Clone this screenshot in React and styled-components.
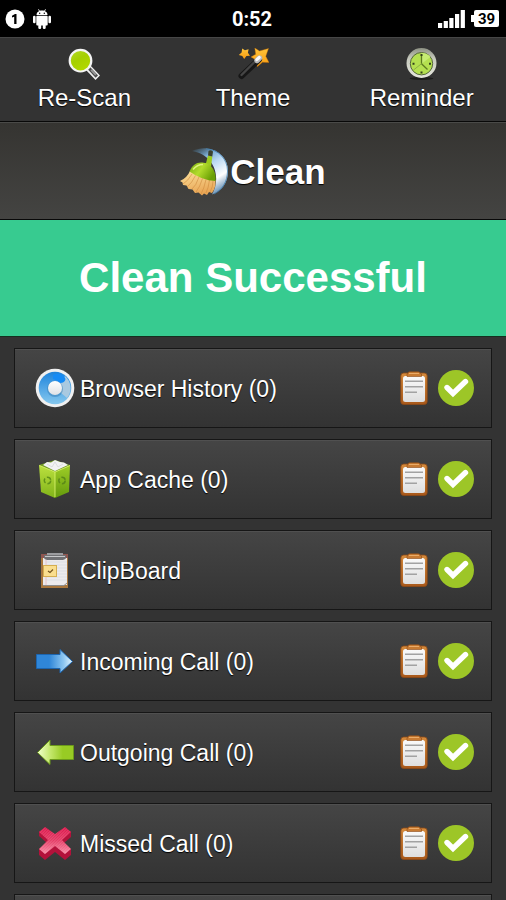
import React, { useState } from "react";
import styled, { createGlobalStyle } from "styled-components";

const items = [
  { id: "browser", label: "Browser History (0)", icon: BrowserIcon },
  { id: "cache", label: "App Cache (0)", icon: CacheIcon },
  { id: "clipboard", label: "ClipBoard", icon: PadIcon },
  { id: "incoming", label: "Incoming Call (0)", icon: IncomingIcon },
  { id: "outgoing", label: "Outgoing Call (0)", icon: OutgoingIcon },
  { id: "missed", label: "Missed Call (0)", icon: MissedIcon },
];

export default function App() {
  return (
    <>
      <GlobalStyle />
      <Screen>
        <StatusBar>
          <StatusGroup>
            <NotificationIcon />
            <DroidIcon />
          </StatusGroup>
          <Clock>0:52</Clock>
          <StatusGroup $end>
            <SignalIcon />
            <Battery>39</Battery>
          </StatusGroup>
        </StatusBar>
        <Toolbar>
          <ToolButton type="button">
            <ScanIcon />
            Re-Scan
          </ToolButton>
          <ToolButton type="button">
            <WandIcon />
            Theme
          </ToolButton>
          <ToolButton type="button">
            <ClockIcon />
            Reminder
          </ToolButton>
        </Toolbar>
        <CleanButton type="button">
          <BroomIcon />
          Clean
        </CleanButton>
        <Banner role="status">Clean Successful</Banner>
        <List>
          {items.map((item) => (
            <CleanRow key={item.id} item={item} />
          ))}
          <Row aria-hidden="true" />
        </List>
      </Screen>
    </>
  );
}

function CleanRow({ item }) {
  const [checked, setChecked] = useState(true);
  const Icon = item.icon;
  return (
    <Row>
      <RowLabel htmlFor={item.id}>
        <Icon />
        <RowText>{item.label}</RowText>
      </RowLabel>
      <DetailsButton type="button" aria-label={"Details: " + item.label}>
        <DetailsIcon />
      </DetailsButton>
      <Tick>
        <TickInput
          type="checkbox"
          id={item.id}
          checked={checked}
          onChange={(e) => setChecked(e.target.checked)}
        />
        {checked && <TickIcon />}
      </Tick>
    </Row>
  );
}

/* status bar icons */

function NotificationIcon() {
  return (
    <svg width="20" height="20" viewBox="0 0 20 20">
      <circle cx="10" cy="10" r="9.5" fill="#fff" />
      <path d="M7 6.7L10 5H11.5V15H9.2V7.8L7 8.6Z" fill="#000" />
    </svg>
  );
}

function DroidIcon() {
  return (
    <svg width="18" height="20" viewBox="0 0 18 20" fill="#fff">
      <path d="M3.5 6C3.5 3.2 6 1.6 9 1.6S14.5 3.2 14.5 6Z" />
      <path d="M5.5 0.3L7 3M12.5 0.3L11 3" stroke="#fff" strokeWidth="0.9" />
      <rect x="3.3" y="6.8" width="11.4" height="9.6" rx="1" />
      <rect x="0" y="6.8" width="2.6" height="7.4" rx="1.2" />
      <rect x="15.4" y="6.8" width="2.6" height="7.4" rx="1.2" />
      <rect x="5.3" y="14" width="2.9" height="6" rx="1.2" />
      <rect x="9.8" y="14" width="2.9" height="6" rx="1.2" />
      <circle cx="6.7" cy="4.2" r="0.7" fill="#000" />
      <circle cx="11.3" cy="4.2" r="0.7" fill="#000" />
    </svg>
  );
}

function SignalIcon() {
  return (
    <svg width="28" height="18" viewBox="0 0 28 18" fill="#fff">
      <rect x="0" y="13" width="4.2" height="5" />
      <rect x="5.7" y="11" width="4.2" height="7" />
      <rect x="11.3" y="8" width="4.2" height="10" />
      <rect x="17" y="4" width="4.2" height="14" />
      <rect x="22.7" y="0" width="4.2" height="18" />
    </svg>
  );
}

/* toolbar icons */

function ScanIcon() {
  return (
    <svg width="32" height="32" viewBox="0 0 32 32">
      <defs>
        <linearGradient id="lens" x1="0" y1="0" x2="0.6" y2="1">
          <stop offset="0" stopColor="#b4db2c" />
          <stop offset="0.5" stopColor="#a5cf00" />
          <stop offset="1" stopColor="#b2d800" />
        </linearGradient>
      </defs>
      <path d="M17.5 21.5L22 17L32 27.5L27.5 32Z" fill="#f2f2f2" />
      <path d="M20 21.5L22.3 19.2L30 27.5L27.6 29.8Z" fill="#4c4c4c" />
      <path d="M22.5 22.5L23.8 21.2L28.5 26.3L27.2 27.6Z" fill="#999" />
      <circle cx="12.5" cy="12.7" r="10.8" fill="url(#lens)" stroke="#f4f4f4" strokeWidth="2.2" />
    </svg>
  );
}

function WandIcon() {
  return (
    <svg width="32" height="32" viewBox="0 0 32 32">
      <defs>
        <linearGradient id="star" x1="0" y1="0" x2="0" y2="1">
          <stop offset="0" stopColor="#ffc53a" />
          <stop offset="1" stopColor="#f79a10" />
        </linearGradient>
      </defs>
      <path
        d="M17.8 0L22.5 3L31.5 0.5L28.8 8.3L32 14.6L25.5 14.2L20.3 18.7L19.2 12L14 9L18.7 6.3Z"
        fill="url(#star)"
        stroke="#c96e00"
        strokeWidth="0.4"
      />
      <path d="M4.5 28L22 11.5" stroke="#171717" strokeWidth="6" strokeLinecap="round" />
      <path d="M4.5 27L17 14.5" stroke="#454545" strokeWidth="2.4" strokeLinecap="round" />
      <path d="M20 12.5L22.5 10" stroke="#b9b9b9" strokeWidth="5.4" strokeLinecap="round" />
      <path d="M19.8 11.7L22.3 9.4" stroke="#fafafa" strokeWidth="3" strokeLinecap="round" />
      <path
        d="M5.2 0.5L7.9 2.2L11.6 1.3L10.9 4.8L13 7.7L9.4 8L7.2 11L5.3 7.9L1.8 7L4.6 4.4Z"
        fill="url(#star)"
      />
    </svg>
  );
}

function ClockIcon() {
  return (
    <svg width="32" height="32" viewBox="0 0 32 32">
      <defs>
        <linearGradient id="rim" x1="0" y1="0" x2="0" y2="1">
          <stop offset="0" stopColor="#8d9183" />
          <stop offset="0.35" stopColor="#c5c8bc" />
          <stop offset="1" stopColor="#e6e7de" />
        </linearGradient>
      </defs>
      <ellipse cx="15.5" cy="30.5" rx="12" ry="1.5" fill="#1d1d1d" />
      <circle cx="15.5" cy="15" r="15" fill="url(#rim)" />
      <circle cx="15.5" cy="15.7" r="11.2" fill="#b4e050" stroke="#54663b" strokeWidth="1" />
      <path d="M15.5 5V15.7L24.5 9A11 11 0 0 0 15.5 5Z" fill="#c6ec73" />
      <path d="M15.5 15.7V7M15.5 15.7L21.5 21.5" stroke="#5d7d20" strokeWidth="1.3" fill="none" />
      <path d="M15.5 15.7L7.5 22" stroke="#82a63e" strokeWidth="0.8" />
      <path d="M15.5 6V8M15.5 23.5V25.5M6.5 15.7H8.5M23 15.7H25" stroke="#33411c" strokeWidth="2" />
    </svg>
  );
}

function BroomIcon() {
  return (
    <svg width="50" height="50" viewBox="0 0 50 50">
      <defs>
        <linearGradient id="moon" x1="0.1" y1="0" x2="0.6" y2="1">
          <stop offset="0" stopColor="#4b7fa6" stopOpacity="0.2" />
          <stop offset="0.25" stopColor="#7fb0d8" />
          <stop offset="0.45" stopColor="#bcdaf3" />
          <stop offset="0.75" stopColor="#fff" />
          <stop offset="1" stopColor="#6f96b8" />
        </linearGradient>
        <linearGradient id="bristle" x1="0" y1="0" x2="0.3" y2="1">
          <stop offset="0" stopColor="#fbe09c" />
          <stop offset="1" stopColor="#e9a655" />
        </linearGradient>
        <linearGradient id="head" x1="0" y1="0" x2="1" y2="0.5">
          <stop offset="0" stopColor="#79ad12" />
          <stop offset="0.5" stopColor="#b3dc2c" />
          <stop offset="1" stopColor="#6a9f04" />
        </linearGradient>
      </defs>
      <path d="M12 4C30 -4 48 7 48 24C48 36 42 44 32 47.5C41 32 36 8 12 4Z" fill="url(#moon)" />
      <path d="M26 1.8C39 2.5 47.5 12.5 47.5 24C47.5 35 42 43 34 47" stroke="#3f7dae" strokeWidth="0.8" fill="none" />
      <path
        d="M10 24L35.5 33Q36 41 32 46L29 45L27 48L24 46.5L22 48.5L18.5 45.5L15 46L12.5 42.5L8.5 42L6.5 38.5L3 38L2.5 35.5L0 34Q7 31 10 24Z"
        fill="url(#bristle)"
      />
      <path
        d="M12 27Q8 34 3 37M15.5 28.5Q12 36 7 40M19 30Q16 39 12 42M22.5 31.5Q20 40 16 45M26 32.5Q24 42 21 47M29.5 33Q28.5 41 26 46M33 34Q33 40 30 45"
        stroke="#cf8a3e"
        strokeWidth="0.6"
        fill="none"
      />
      <path d="M28 8.5L32.3 9.5L31 20L25.5 18Z" fill="#9ccc1d" />
      <path d="M28.5 4Q30.5 2.5 33 4.5L32.3 9.5L28 8.5Z" fill="#3b4330" />
      <path d="M9.5 24.5C12 18.5 16 15.5 21 15.5Q26 15 30.5 18.5Q36.5 25 35.5 34Q22 33.5 9.5 24.5Z" fill="url(#head)" />
      <path d="M13 22.5Q17 17.5 23 17.5" stroke="#e0f57c" strokeWidth="1.5" fill="none" />
    </svg>
  );
}

/* row icons */

function BrowserIcon() {
  return (
    <svg width="40" height="40" viewBox="0 0 40 40">
      <defs>
        <linearGradient id="disc" x1="0" y1="0" x2="0" y2="1">
          <stop offset="0" stopColor="#1c83dc" />
          <stop offset="1" stopColor="#86c8ee" />
        </linearGradient>
        <linearGradient id="knob" x1="0" y1="0" x2="0" y2="1">
          <stop offset="0" stopColor="#fff" />
          <stop offset="1" stopColor="#dfe2e6" />
        </linearGradient>
      </defs>
      <circle cx="20" cy="20" r="19.3" fill="#f0f0f0" />
      <circle cx="20" cy="20" r="16.3" fill="url(#disc)" />
      <path d="M20 20L30 8A16 16 0 0 1 32 30Z" fill="#a9c9e0" />
      <path d="M18 11Q22 12 25 15Q30 15 30.5 11L29 8Q23 4 18 7Z" fill="#168bf5" />
      <circle cx="20" cy="21" r="8" fill="#357eb5" opacity="0.5" />
      <circle cx="20" cy="20" r="7" fill="url(#knob)" />
    </svg>
  );
}

function CacheIcon() {
  return (
    <svg width="40" height="40" viewBox="0 0 40 40">
      <defs>
        <linearGradient id="binLeft" x1="0" y1="0" x2="0" y2="1">
          <stop offset="0" stopColor="#bce13f" />
          <stop offset="1" stopColor="#80b319" />
        </linearGradient>
        <linearGradient id="binRight" x1="0" y1="0" x2="0" y2="1">
          <stop offset="0" stopColor="#9fce28" />
          <stop offset="1" stopColor="#649a0c" />
        </linearGradient>
      </defs>
      <path d="M4 6L20 1L35 6L20 13Z" fill="#719c22" />
      <path d="M8 6L12 3L16 3.5L20 1L25 3L29 3.5L33 6L20 12Z" fill="#f2f2f2" />
      <path d="M12 5L17 8L20 3L23 8L28 5" stroke="#d5d8d8" strokeWidth="0.8" fill="none" />
      <path d="M4 6L20 13V39L6 33Z" fill="url(#binLeft)" />
      <path d="M35 6L20 13V39L34 33Z" fill="url(#binRight)" />
      <path d="M4.5 6.5L20 13L35 6.5M20 13V38" stroke="#d8f36b" strokeWidth="0.9" fill="none" />
      <circle cx="12.5" cy="21.5" r="3.2" fill="none" stroke="#62921a" strokeWidth="1.5" strokeDasharray="5 2" />
      <circle cx="27" cy="21.5" r="3.2" fill="none" stroke="#5c8a18" strokeWidth="1.5" strokeDasharray="5 2" />
    </svg>
  );
}

function PadIcon() {
  return (
    <svg width="40" height="40" viewBox="0 0 40 40">
      <rect x="6" y="4" width="27" height="34" fill="#a9773d" />
      <rect x="6" y="4" width="27" height="4" fill="#8f5650" />
      <rect x="8" y="8" width="24" height="27" fill="#eceaec" />
      <path d="M11 12H32M11 15H32M11 18H32M11 21H32M11 24H32M11 27H32M11 30H32" stroke="#dcdfe4" />
      <path d="M11 8V35" stroke="#e8c4c4" />
      <path d="M8 35.5H29L32 33" stroke="#8d8d8d" fill="none" />
      <path d="M9 5H12V3H28V5H31V8Q30 10 26 10H14Q10 10 9 8Z" fill="#707174" />
      <path d="M12 4H28M10 6.5H30" stroke="#c7c8ca" />
      <rect x="8.5" y="15.5" width="13" height="11" fill="#fade8e" stroke="#d5ae50" />
      <path d="M13 21L15 22.5L18 19.5" stroke="#74541f" strokeWidth="1.2" fill="none" />
    </svg>
  );
}

function IncomingIcon() {
  return (
    <svg width="40" height="40" viewBox="0 0 40 40">
      <defs>
        <linearGradient id="inArrow" x1="0" y1="0" x2="1" y2="0">
          <stop offset="0.35" stopColor="#2f86d8" />
          <stop offset="0.75" stopColor="#8cc6f1" />
          <stop offset="1" stopColor="#e6f6ff" />
        </linearGradient>
      </defs>
      <path d="M1.5 13.5H25V8.5L37.5 20.5L25 32V27.5H1.5Z" fill="url(#inArrow)" stroke="#1c65af" />
    </svg>
  );
}

function OutgoingIcon() {
  return (
    <svg width="40" height="40" viewBox="0 0 40 40">
      <defs>
        <linearGradient id="outArrow" x1="0" y1="0" x2="1" y2="0">
          <stop offset="0" stopColor="#f2ffd0" />
          <stop offset="0.35" stopColor="#c5e86d" />
          <stop offset="0.7" stopColor="#98cb24" />
        </linearGradient>
      </defs>
      <path d="M38.5 13.5H15V8L2.5 20.5L15 32.5V27.5H38.5Z" fill="url(#outArrow)" stroke="#6b991a" />
    </svg>
  );
}

function MissedIcon() {
  return (
    <svg width="40" height="40" viewBox="0 0 40 40">
      <defs>
        <linearGradient id="cross" x1="0" y1="0" x2="0" y2="1">
          <stop offset="0" stopColor="#dc1248" />
          <stop offset="0.5" stopColor="#e43a64" />
          <stop offset="1" stopColor="#f98ba5" />
        </linearGradient>
        <pattern id="ribs" width="2" height="2" patternUnits="userSpaceOnUse" patternTransform="rotate(45)">
          <rect width="1" height="2" fill="#fff" opacity="0.15" />
        </pattern>
      </defs>
      <path
        d="M4 26V32L10 37L20 29L30 37L36 32V26L29 20L36 14V8L20 18L4 8V13L12 20Z"
        fill="#b3123b"
      />
      <path
        d="M10 4L20 11L30 4L36 9L27 17L36 26L30 31L20 23L10 31L4 26L13 17L4 9Z"
        fill="url(#cross)"
      />
      <path
        d="M10 4L20 11L30 4L36 9L27 17L36 26L30 31L20 23L10 31L4 26L13 17L4 9Z"
        fill="url(#ribs)"
      />
    </svg>
  );
}

function DetailsIcon() {
  return (
    <svg width="28" height="34" viewBox="0 0 28 34">
      <defs>
        <linearGradient id="board" x1="0" y1="0" x2="0" y2="1">
          <stop offset="0" stopColor="#d58b3d" />
          <stop offset="1" stopColor="#a8581a" />
        </linearGradient>
        <linearGradient id="paper" x1="0" y1="0" x2="0" y2="1">
          <stop offset="0" stopColor="#fafafa" />
          <stop offset="1" stopColor="#dedede" />
        </linearGradient>
      </defs>
      <rect x="0.8" y="2" width="26.4" height="31.5" rx="3" fill="url(#board)" stroke="#8c4917" strokeWidth="0.8" />
      <rect x="3" y="5" width="22" height="26" rx="2.5" fill="url(#paper)" />
      <path d="M8 2Q8 0.7 10 0.7H18Q20 0.7 20 2L21.5 3V5.5H7V3Z" fill="#c87b32" stroke="#8c4917" strokeWidth="0.6" />
      <path d="M9 2.5H19" stroke="#eaab68" />
      <path d="M5 10.3H23M5 15.8H23M5 21.3H17" stroke="#a2a2a2" strokeWidth="1.4" />
    </svg>
  );
}

function TickIcon() {
  return (
    <svg width="36" height="36" viewBox="0 0 36 36">
      <path
        d="M9 17.5L15 23.5L27.5 11.5"
        fill="none"
        stroke="#fff"
        strokeWidth="5.4"
        strokeLinecap="round"
      />
    </svg>
  );
}

const GlobalStyle = createGlobalStyle`
  * {
    box-sizing: border-box;
  }
  body {
    margin: 0;
    background: #333;
    color: #fff;
    font-family: "Liberation Sans", Arial, sans-serif;
  }
  button {
    border: 0;
    padding: 0;
    background: none;
    color: inherit;
    font: inherit;
    cursor: pointer;
  }
  svg {
    display: block;
    flex: none;
  }
`;

const Screen = styled.div`
  display: flex;
  flex-direction: column;
  height: 100vh;
  overflow: hidden;
`;

const StatusBar = styled.header`
  display: grid;
  grid-template-columns: 1fr auto 1fr;
  align-items: center;
  flex: none;
  height: 37px;
  padding: 0 7px 0 5px;
  background: #000;
`;

const StatusGroup = styled.div`
  display: flex;
  align-items: center;
  justify-content: ${(props) => (props.$end ? "flex-end" : "flex-start")};
  gap: 8px;
`;

const Clock = styled.time`
  font-family: Roboto, sans-serif;
  font-size: 20px;
  font-weight: 700;
`;

const Battery = styled.span`
  position: relative;
  width: 25px;
  height: 17px;
  border-radius: 2px;
  background: #fff;
  color: #000;
  font-family: Roboto, sans-serif;
  font-size: 15px;
  font-weight: 700;
  line-height: 18px;
  text-align: center;
  &::before {
    content: "";
    position: absolute;
    top: 5px;
    left: -3px;
    width: 3px;
    height: 7px;
    background: #fff;
  }
`;

const Toolbar = styled.nav`
  display: grid;
  grid-template-columns: repeat(3, 1fr);
  flex: none;
  border-top: 1px solid #464646;
  border-bottom: 1px solid #080808;
  background: #333;
`;

const ToolButton = styled.button`
  display: flex;
  flex-direction: column;
  align-items: center;
  gap: 4px;
  padding: 10px 0 9px;
  font-size: 24px;
  line-height: 28px;
  text-shadow: 0 1px 1px #000;
`;

const CleanButton = styled.button`
  display: flex;
  align-items: center;
  justify-content: center;
  flex: none;
  height: 98px;
  padding-top: 2px;
  border-top: 1px solid #4a4a48;
  border-bottom: 1px solid #080808;
  background: linear-gradient(#353431, #444442);
  font-size: 35px;
  font-weight: 700;
  text-shadow: 0 1px 1px #000;
`;

const Banner = styled.div`
  flex: none;
  padding: 34px 0;
  border-bottom: 1px solid #14301f;
  background: #37cb90;
  font-size: 42px;
  font-weight: 700;
  line-height: 48px;
  text-align: center;
`;

const List = styled.ul`
  display: flex;
  flex-direction: column;
  gap: 11px;
  flex: 1;
  min-height: 0;
  margin: 0;
  padding: 11px 14px;
  overflow-y: auto;
  scrollbar-width: none;
  list-style: none;
`;

const Row = styled.li`
  display: flex;
  align-items: center;
  flex: none;
  height: 80px;
  padding: 0 17px 0 20px;
  border: 1px solid #161616;
  background: linear-gradient(#454545, #333);
  box-shadow: inset 0 1px 0 #505050;
`;

const RowLabel = styled.label`
  display: flex;
  align-items: center;
  gap: 5px;
  flex: 1;
`;

const RowText = styled.span`
  padding-top: 2px;
  font-size: 23px;
  line-height: 28px;
  text-shadow: 0 1px 1px #000;
`;

const DetailsButton = styled.button`
  flex: none;
  margin-right: 10px;
`;

const Tick = styled.span`
  display: grid;
  flex: none;
  > * {
    grid-area: 1 / 1;
  }
  svg {
    pointer-events: none;
    z-index: 1;
  }
`;

const TickInput = styled.input`
  appearance: none;
  width: 36px;
  height: 36px;
  margin: 0;
  border-radius: 50%;
  background: #5c5c5c;
  cursor: pointer;
  &:checked {
    background: #9dc627;
  }
`;
